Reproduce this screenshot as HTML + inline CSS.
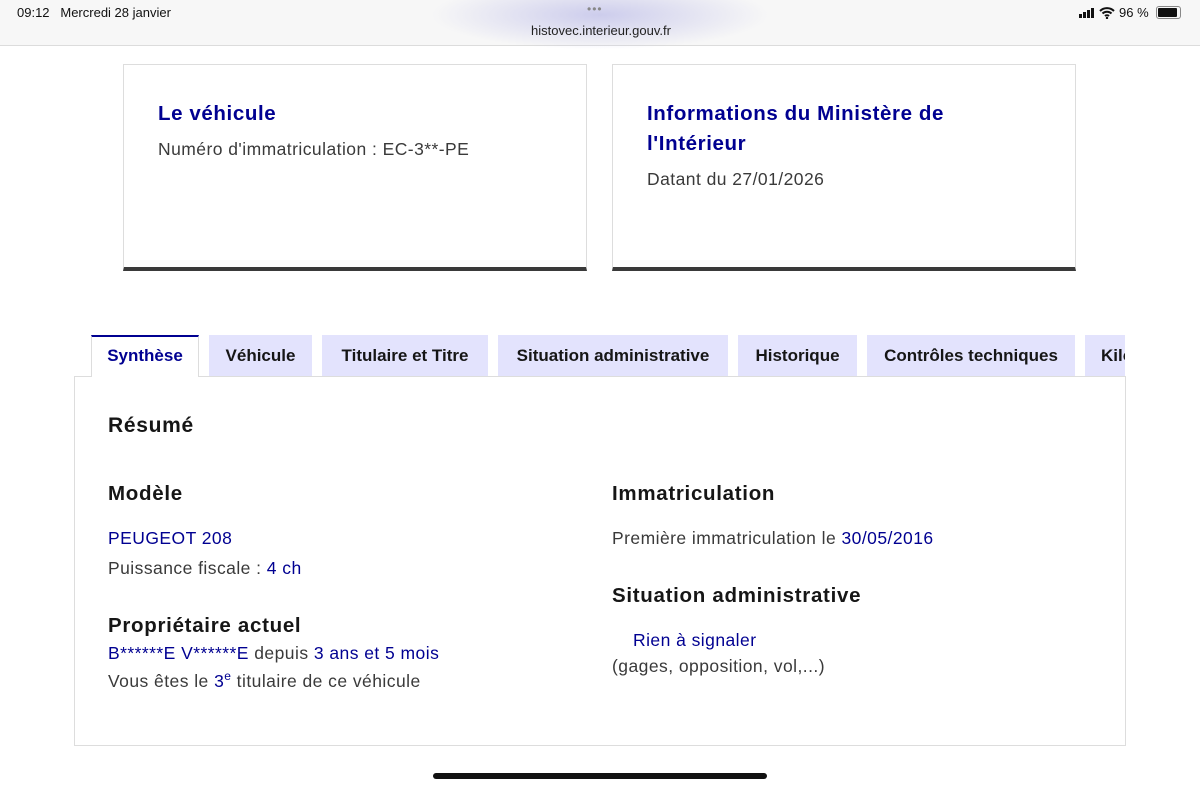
<!DOCTYPE html>
<html><head><meta charset="utf-8"><style>
*{margin:0;padding:0;box-sizing:border-box}
body{width:1200px;height:788px;background:#fff;font-family:"Liberation Sans",sans-serif;position:relative;overflow:hidden;color:#3a3a3a}
.abs{position:absolute;white-space:nowrap}
.sb{position:absolute;left:0;top:0;width:1200px;height:46px;background:#f7f7f7;border-bottom:1px solid #dcdcdc}
.glow{position:absolute;left:430px;top:-20px;width:340px;height:70px;background:radial-gradient(ellipse at center,rgba(200,200,235,.9),rgba(247,247,247,0) 70%)}
.card{position:absolute;top:64px;width:464px;height:207px;border:1px solid #ddd;border-bottom:4px solid #3a3a3a;background:#fff}
.ct{position:absolute;left:34px;font-size:20.5px;font-weight:bold;color:#000091;line-height:30px;letter-spacing:0.6px;white-space:nowrap}
.cs{position:absolute;left:34px;font-size:17.5px;color:#3a3a3a;letter-spacing:0.45px;white-space:nowrap}
.tab{position:absolute;top:335px;height:41px;background:#e3e3fd;font-size:17px;font-weight:bold;color:#161616;text-align:center;line-height:41px;overflow:hidden;white-space:nowrap}
.panel{position:absolute;left:74px;top:376px;width:1052px;height:370px;border:1px solid #ddd}
h3{font-size:21px;font-weight:bold;color:#161616;letter-spacing:0.7px}
.b{color:#000091}
.t{font-size:17.5px;letter-spacing:0.45px}
</style></head><body>
<div class="sb"><div class="glow"></div>
<div class="abs" style="left:17px;top:5px;font-size:13px;color:#111">09:12&nbsp;&nbsp;&nbsp;Mercredi 28 janvier</div>
<div class="abs" style="left:587px;top:2px;font-size:12px;color:#888;letter-spacing:1px">•••</div>
<div class="abs" style="left:531px;top:23px;font-size:13px;color:#222">histovec.interieur.gouv.fr</div>
<div class="abs" style="left:1079px;top:8px;width:18px;height:10px">
<div style="position:absolute;left:0;bottom:0;width:3px;height:4px;background:#111"></div>
<div style="position:absolute;left:4px;bottom:0;width:3px;height:6px;background:#111"></div>
<div style="position:absolute;left:8px;bottom:0;width:3px;height:8px;background:#111"></div>
<div style="position:absolute;left:12px;bottom:0;width:3px;height:10px;background:#111"></div></div>
<svg class="abs" style="left:1099px;top:6px" width="16" height="13" viewBox="0 0 16 13"><path d="M1 5a10 10 0 0 1 14 0M3.5 7.5a6.5 6.5 0 0 1 9 0M6 10a3 3 0 0 1 4 0" stroke="#111" stroke-width="2" fill="none"/><circle cx="8" cy="12" r="1.2" fill="#111"/></svg>
<div class="abs" style="left:1119px;top:5px;font-size:13px;color:#111">96 %</div>
<div class="abs" style="left:1156px;top:6px;width:25px;height:13px;border:1px solid #888;border-radius:3px;padding:1px"><div style="width:19px;height:9px;background:#111;border-radius:1px"></div></div>
</div>

<div class="card" style="left:123px">
<div class="ct" style="top:34px">Le véhicule</div>
<div class="cs" style="top:74px">Numéro d'immatriculation : EC-3**-PE</div></div>
<div class="card" style="left:612px">
<div class="ct" style="top:34px">Informations du Ministère de<br>l'Intérieur</div>
<div class="cs" style="top:104px">Datant du 27/01/2026</div></div>

<div class="panel"></div>
<div class="tab" style="left:91px;width:108px;height:42px;background:#fff;border-top:2px solid #000091;border-left:1px solid #ddd;border-right:1px solid #ddd;color:#000091;line-height:38px">Synthèse</div>
<div class="tab" style="left:209px;width:103px">Véhicule</div>
<div class="tab" style="left:322px;width:166px">Titulaire et Titre</div>
<div class="tab" style="left:498px;width:230px">Situation administrative</div>
<div class="tab" style="left:738px;width:119px">Historique</div>
<div class="tab" style="left:867px;width:208px">Contrôles techniques</div>
<div class="tab" style="left:1085px;width:40px;text-align:left;padding-left:16px">Kilométrage</div>

<h3 class="abs" style="left:108px;top:414px">Résumé</h3>
<h3 class="abs" style="left:108px;top:482px;font-size:20.5px">Modèle</h3>
<div class="abs t b" style="left:108px;top:528px">PEUGEOT 208</div>
<div class="abs t" style="left:108px;top:558px">Puissance fiscale : <span class="b">4 ch</span></div>
<h3 class="abs" style="left:108px;top:614px;font-size:20.5px">Propriétaire actuel</h3>
<div class="abs t" style="left:108px;top:643px"><span class="b">B******E V******E</span> depuis <span class="b">3 ans et 5 mois</span></div>
<div class="abs t" style="left:108px;top:669px">Vous êtes le <span class="b">3<sup style="font-size:12px">e</sup></span> titulaire de ce véhicule</div>

<h3 class="abs" style="left:612px;top:482px;font-size:20.5px">Immatriculation</h3>
<div class="abs t" style="left:612px;top:528px">Première immatriculation le <span class="b">30/05/2016</span></div>
<h3 class="abs" style="left:612px;top:584px;font-size:20.5px">Situation administrative</h3>
<div class="abs t b" style="left:633px;top:630px">Rien à signaler</div>
<div class="abs t" style="left:612px;top:656px">(gages, opposition, vol,...)</div>

<div class="abs" style="left:433px;top:773px;width:334px;height:6px;border-radius:3px;background:#111"></div>
</body></html>
